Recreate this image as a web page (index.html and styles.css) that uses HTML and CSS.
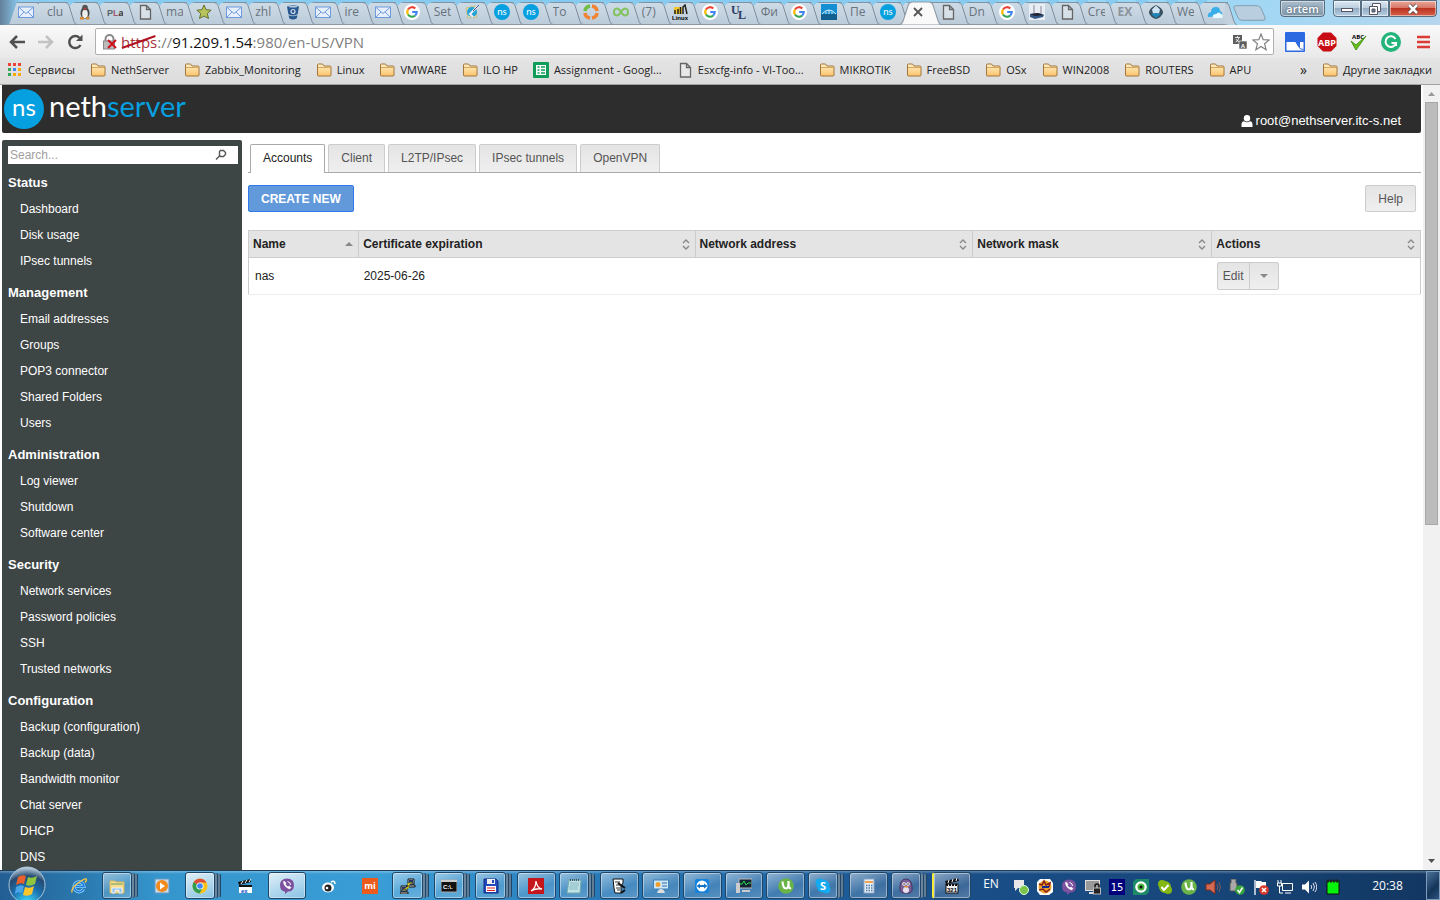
FILE: index.html
```html
<!DOCTYPE html>
<html lang="en">
<head>
    <meta charset="UTF-8">
    <meta name="viewport" content="width=device-width, initial-scale=1.0">
    <title>VPN - NethServer</title>
    <link rel="stylesheet" href="styles.css">
</head>
<body>
    <!-- shared icons -->
    <svg class="sprite" aria-hidden="true">
        <linearGradient id="g-folder" x1="0" y1="0" x2="0" y2="1"><stop offset="0" stop-color="#fff0c8"/><stop offset="1" stop-color="#fbc46c"/></linearGradient>
        <radialGradient id="g-orb" cx=".5" cy="1" r="1"><stop offset="0" stop-color="#3fe0ff"/><stop offset=".45" stop-color="#1b6fae"/><stop offset=".75" stop-color="#264a70"/><stop offset="1" stop-color="#c8dbe8"/></radialGradient>
        <symbol id="mail" viewBox="0 0 16 16"><rect x=".5" y="3" width="15" height="10.5" fill="#e6effb" stroke="#6f9bdb"/><path d="M1 3.500l7 6 7-6M1 13l5-5M15 13l-5-5" fill="none" stroke="#6f9bdb"/></symbol>
        <symbol id="page" viewBox="0 0 16 16"><path d="M3.500 1.500h6l4 4v9.500h-10zM9.500 1.500v4h4" fill="#f4f4f4" fill-opacity=".4" stroke="#666" stroke-width="1.300"/></symbol>
        <symbol id="google" viewBox="0 0 16 16"><circle cx="8" cy="8" r="8" fill="#fff"/><g fill="none" stroke-width="2.200"><path d="M11.300 4.500A4.700 4.700 0 0 0 4 5.500" stroke="#ea4335"/><path d="M4 5.500a4.700 4.700 0 0 0 0 5" stroke="#fbbc05"/><path d="M4 10.500a4.700 4.700 0 0 0 7.200 1" stroke="#34a853"/><path d="M11.200 11.500A4.700 4.700 0 0 0 12.700 8H8.200" stroke="#4285f4"/></g></symbol>
        <symbol id="ns" viewBox="0 0 40 40"><circle cx="20" cy="20" r="20" fill="#069fdf"/><text x="20" y="27" text-anchor="middle" class="ns-text">ns</text></symbol>
        <symbol id="folder" viewBox="0 0 16 16"><path d="M1.500 13V3q0-1 1-1h4l1.500 2h6q1 0 1 1v8q0 1-1 1h-11.500q-1 0-1-1z" fill="url(#g-folder)" stroke="#a1763f"/><path d="M2 5.500h13" stroke="#d8a75e"/></symbol>
        <symbol id="tux" viewBox="0 0 16 16"><ellipse cx="8" cy="9" rx="4.500" ry="6" fill="#444"/><ellipse cx="8" cy="10" rx="2.800" ry="4.500" fill="#eee"/><circle cx="8" cy="3.500" r="2.800" fill="#555"/><path d="M6.500 4h3L8 6z" fill="#c33"/><path d="M3 13l4 0v2.500H3zM9 13h4l-1 2.500H9z" fill="#d28a3a"/></symbol>
        <symbol id="star" viewBox="0 0 16 16"><path d="M8 1l2.100 4.700 5 .5-3.800 3.300 1.200 5L8 12l-4.500 2.500 1.200-5L.9 6.200l5-.5z" fill="#b8c45c" stroke="#66702c"/></symbol>
        <symbol id="bucket" viewBox="0 0 16 16"><path d="M2 2.500q6-3 12 0l-1.300 7.500q-4.700 3-9.400 0zM3.600 11.300q4.400 2 8.800 0l-.6 3q-3.800 2.400-7.600 0z" fill="#28588f"/><ellipse cx="8" cy="2.600" rx="4.500" ry="1" fill="#b9cadd"/><circle cx="8" cy="7.500" r="2" fill="#28588f" stroke="#d5e0ec" stroke-width="1.200"/></symbol>
        <symbol id="pencil" viewBox="0 0 16 16"><path d="M2 4l9-2 2 11-9 1z" fill="#ece7bc" stroke="#c5bc82"/><circle cx="8" cy="8" r="5" fill="#22a4d8"/><path d="M14 2L6 10l3 3" fill="none" stroke="#eef" stroke-width="2"/><path d="M15 1l-6 6" stroke="#457" /></symbol>
        <symbol id="ring" viewBox="0 0 16 16"><g fill="none" stroke-width="3.500"><path d="M1.900 7A6.200 6.200 0 0 1 7 1.900" stroke="#70bd44"/><path d="M9 1.900A6.200 6.200 0 0 1 14.100 7M14.100 9A6.200 6.200 0 0 1 9 14.100M7 14.100A6.200 6.200 0 0 1 1.900 9" stroke="#f08432"/></g></symbol>
        <symbol id="loops" viewBox="0 0 16 16"><path d="M8 8C5 3 1 4 1 8s4 5 7 0 7-4 7 0-4 5-7 0z" fill="none" stroke="#82c35e" stroke-width="2"/></symbol>
        <symbol id="bridge" viewBox="0 0 16 16"><rect width="16" height="16" fill="#148fd4"/><rect y="10" width="16" height="6" fill="#12608f"/><path d="M1 10q7-8 14 0M5 7.500V10M8 6v4M11 7.500V10" fill="none" stroke="#d8efff"/></symbol>
        <symbol id="router" viewBox="0 0 16 16"><rect width="16" height="16" fill="#e8eef4"/><path d="M5 9V1M12 10V2" stroke="#889"/><path d="M1 10l8-1 6 2-1 2-8 2-5-2z" fill="#355a87"/><path d="M1 10l8-1 6 2-9 1z" fill="#223"/></symbol>
        <symbol id="gem" viewBox="0 0 16 16"><path d="M8 1q7 3 7 8-2 5-7 6-5-1-7-6 0-5 7-8z" fill="#3a5060"/><path d="M8 1.500l4 4-1 4H5L4 5.500z" fill="#cfe4f2"/><path d="M3 10l5 4 5-4-5-1z" fill="#1d86ba"/></symbol>
        <symbol id="cloud" viewBox="0 0 16 16"><path d="M1 13q-1-4 3-5 0-5 5-5 4 0 4 4 3 1 2 5z" fill="#38afe8"/><path d="M6 14q-1-4 3-4 3-3 5 0 3 1 1 4z" fill="#e9f7ff"/></symbol>
        <symbol id="utorrent" viewBox="0 0 16 16"><circle cx="8" cy="8" r="7.800" fill="#69b347"/><path d="M4.500 3.500q.5 7 3.500 7t2.500-7.500M10.500 6q0 5 2.500 4" fill="none" stroke="#fff" stroke-width="2.200"/></symbol>
        <symbol id="viber" viewBox="0 0 16 16"><path d="M8 .5q7 0 7 6.500t-6 6.600L6 16v-2.500Q1 13 1 7T8 .5z" fill="#7c529e"/><path d="M4.500 3.500q0 5 6 7.500l1.500-1.500-2-1.500-1 .8Q7 8 6.500 6.500L7 5.500 5.800 3.500z" fill="#fff" stroke="#fff" stroke-width=".6"/><path d="M8.500 3.500q3 .5 3 3.500" fill="none" stroke="#fff"/></symbol>
    </svg>

    <header class="browser">
        <div class="titlebar">
            <ul class="tabs">
                <li class="tab"><svg><use href="#mail"/></svg></li>
                <li class="tab"><span>clu</span></li>
                <li class="tab"><svg><use href="#tux"/></svg></li>
                <li class="tab"><svg viewBox="0 0 16 16"><text x="0" y="12" class="pla"><tspan fill="#566">P</tspan><tspan fill="#a45a74">L</tspan><tspan fill="#333">a</tspan></text></svg></li>
                <li class="tab"><svg><use href="#page"/></svg></li>
                <li class="tab"><span>ma</span></li>
                <li class="tab"><svg><use href="#star"/></svg></li>
                <li class="tab"><svg><use href="#mail"/></svg></li>
                <li class="tab"><span>zhl</span></li>
                <li class="tab"><svg><use href="#bucket"/></svg></li>
                <li class="tab"><svg><use href="#mail"/></svg></li>
                <li class="tab"><span>ire</span></li>
                <li class="tab"><svg><use href="#mail"/></svg></li>
                <li class="tab"><svg><use href="#google"/></svg></li>
                <li class="tab"><span>Set</span></li>
                <li class="tab"><svg><use href="#pencil"/></svg></li>
                <li class="tab"><svg><use href="#ns"/></svg></li>
                <li class="tab"><svg><use href="#ns"/></svg></li>
                <li class="tab"><span>To</span></li>
                <li class="tab"><svg><use href="#ring"/></svg></li>
                <li class="tab"><svg><use href="#loops"/></svg></li>
                <li class="tab"><span>(7)</span></li>
                <li class="tab"><svg viewBox="0 0 16 16"><rect x="2" y="3" width="8" height="7" fill="#f1c62b"/><path d="M11 10V3l2-2 2 9M3 10V6M6 10V5M8.500 10V3" stroke="#222" stroke-width="1.500" fill="none"/><text x="0" y="15.500" class="tiny">Linux</text></svg></li>
                <li class="tab"><svg><use href="#google"/></svg></li>
                <li class="tab"><svg viewBox="0 0 16 16"><text x="0" y="10" class="ul">U</text><text x="7" y="15" class="ul">L</text></svg></li>
                <li class="tab"><span>Фи</span></li>
                <li class="tab"><svg><use href="#google"/></svg></li>
                <li class="tab"><svg><use href="#bridge"/></svg></li>
                <li class="tab"><span>Пе</span></li>
                <li class="tab"><svg><use href="#ns"/></svg></li>
                <li class="tab active"><button class="close" aria-label="Close tab"><svg viewBox="0 0 16 16"><path d="M4 4l8 8M12 4l-8 8" stroke="#555" stroke-width="1.800"/></svg></button></li>
                <li class="tab"><svg><use href="#page"/></svg></li>
                <li class="tab"><span>Dn</span></li>
                <li class="tab"><svg><use href="#google"/></svg></li>
                <li class="tab"><svg><use href="#router"/></svg></li>
                <li class="tab"><svg><use href="#page"/></svg></li>
                <li class="tab"><span>Cre</span></li>
                <li class="tab"><span class="ex">EX</span></li>
                <li class="tab"><svg><use href="#gem"/></svg></li>
                <li class="tab"><span>We</span></li>
                <li class="tab"><svg><use href="#cloud"/></svg></li>
            </ul>
            <button class="new-tab" aria-label="New tab"><svg viewBox="0 0 34 16"><path d="M4 .5h21q3 0 4 3l4 9q1 3-2 3H9q-3 0-4-3L1 3Q0 .5 4 .5z" fill="#b9cfdf" stroke="#829aad"/></svg></button>
            <div class="window-controls">
                <button class="profile">artem</button>
                <button class="win min" aria-label="Minimize"><svg viewBox="0 0 14 12"><rect x="1.500" y="5.500" width="11" height="3" fill="#fff" stroke="#556"/></svg></button>
                <button class="win max" aria-label="Restore"><svg viewBox="0 0 14 12"><path d="M4.500.5h8v8h-8z" fill="#fff" stroke="#556"/><path d="M1.500 3.500h8v8h-8z" fill="#fff" stroke="#556"/><path d="M4 6h3v3H4z" fill="#678" stroke="#556"/></svg></button>
                <button class="win quit" aria-label="Close"><svg viewBox="0 0 14 12"><path d="M3 2l8 8M11 2l-8 8" stroke="#544" stroke-width="4"/><path d="M3 2l8 8M11 2l-8 8" stroke="#fff" stroke-width="2.500"/></svg></button>
            </div>
        </div>

        <div class="toolbar">
            <button aria-label="Back"><svg viewBox="0 0 18 18"><path d="M17 9H3M9 3L3 9l6 6" fill="none" stroke="#505050" stroke-width="2.500"/></svg></button>
            <button aria-label="Forward"><svg viewBox="0 0 18 18"><path d="M1 9h14M9 3l6 6-6 6" fill="none" stroke="#c2c2c2" stroke-width="2.500"/></svg></button>
            <button aria-label="Reload"><svg viewBox="0 0 18 18"><path d="M14.500 12A6 6 0 1 1 13.500 4.800" fill="none" stroke="#505050" stroke-width="2.500"/><path d="M16.500 1.500v6.500H10z" fill="#505050"/></svg></button>
            <div class="omnibox">
                <svg class="lock" viewBox="0 0 16 16"><path d="M3.500 8V5a4 4 0 0 1 8 0v3" fill="none" stroke="#888" stroke-width="2"/><rect x="1.500" y="7" width="11" height="8" fill="#bbb" stroke="#888"/><path d="M6 6l8 8M14 6l-8 8" stroke="#d0111b" stroke-width="2"/></svg>
                <label class="address" for="url"><span class="scheme">https<svg viewBox="0 0 40 20" preserveAspectRatio="none"><path d="M1 16L38 4" stroke="#b01020" stroke-width="2"/></svg></span>://<span class="host">91.209.1.54</span></label>
                <input id="url" type="text" value=":980/en-US/VPN">
                <button aria-label="Translate"><svg viewBox="0 0 16 16"><rect x="1" y="1" width="9" height="9" fill="#5c5c5c"/><path d="M3 3.500h5M5.500 2v1.500M3.500 8q3-1 3.500-4.500M4 5q1 2 3 3" stroke="#fff" fill="none" stroke-width=".8"/><rect x="7" y="7" width="8" height="8" fill="#5c5c5c" stroke="#fff" stroke-width=".6"/><text x="8.800" y="13.600" class="tiny white">A</text></svg></button>
                <button aria-label="Bookmark this page"><svg viewBox="0 0 18 18"><path d="M9 1l2.200 5.600 6 .4-4.600 3.800 1.500 5.900L9 13.400l-5.100 3.300 1.500-5.900L.8 7l6-.4z" fill="#fff" stroke="#808080" stroke-width="1.200"/></svg></button>
            </div>
            <button class="ext" aria-label="Tab manager"><svg viewBox="0 0 20 20"><rect x="0" y="0" width="20" height="20" rx="1" fill="#2d69e0"/><path d="M1.500 10h9l3.500 5h1V10h3.500v8.500h-17z" fill="#fff"/><path d="M10.500 9l3 5.500q1 3 5 3" fill="none" stroke="#2d69e0"/></svg></button>
            <button class="ext" aria-label="Adblock Plus"><svg viewBox="0 0 20 20"><path d="M6 .5h8L19.500 6v8L14 19.500H6L.5 14V6z" fill="#c80d14"/><text x="10" y="13.500" text-anchor="middle" class="abp">ABP</text></svg></button>
            <button class="ext" aria-label="Spell check"><svg viewBox="0 0 20 20"><text x="9" y="7" text-anchor="middle" class="abc">ABC</text><path d="M2 9l5 4 10-9L7 18z" fill="#6bc11c" stroke="#45981a"/></svg></button>
            <button class="ext" aria-label="Grammarly"><svg viewBox="0 0 20 20"><circle cx="10" cy="10" r="10" fill="#23b47b"/><path d="M14.500 7A5.300 5.300 0 1 0 15 11H10.500M15 11v3" fill="none" stroke="#fff" stroke-width="2"/></svg></button>
            <button class="ext" aria-label="Menu"><svg viewBox="0 0 20 20"><path d="M4 5h13M4 10h13M4 15h13" stroke="#dd3b36" stroke-width="2.600"/></svg></button>
        </div>

        <nav class="bookmarks">
            <a href="#"><svg viewBox="0 0 16 16"><path d="M1 1h3v3H1zM6 1h3v3H6zM11 1h3v3h-3z" fill="#ea4335"/><path d="M1 6h3v3H1z" fill="#34a853"/><path d="M6 6h3v3H6z" fill="#4285f4"/><path d="M11 6h3v3h-3zM6 11h3v3H6zM11 11h3v3h-3z" fill="#fbaa05"/><path d="M1 11h3v3H1z" fill="#34a853"/></svg>Сервисы</a>
            <a href="#"><svg><use href="#folder"/></svg>NethServer</a>
            <a href="#"><svg><use href="#folder"/></svg>Zabbix_Monitoring</a>
            <a href="#"><svg><use href="#folder"/></svg>Linux</a>
            <a href="#"><svg><use href="#folder"/></svg>VMWARE</a>
            <a href="#"><svg><use href="#folder"/></svg>ILO HP</a>
            <a href="#"><svg viewBox="0 0 16 16"><rect width="16" height="16" rx="1" fill="#0f9d58"/><path d="M3 3h10v10H3z" fill="#fff"/><path d="M4.500 5h2M8 5h4M4.500 8h2M8 8h4M4.500 11h2M8 11h4" stroke="#0f9d58" stroke-width="1.500"/></svg>Assignment - Googl...</a>
            <a href="#"><svg><use href="#page"/></svg>Esxcfg-info - VI-Too...</a>
            <a href="#"><svg><use href="#folder"/></svg>MIKROTIK</a>
            <a href="#"><svg><use href="#folder"/></svg>FreeBSD</a>
            <a href="#"><svg><use href="#folder"/></svg>OSx</a>
            <a href="#"><svg><use href="#folder"/></svg>WIN2008</a>
            <a href="#"><svg><use href="#folder"/></svg>ROUTERS</a>
            <a href="#"><svg><use href="#folder"/></svg>APU</a>
            <button class="more">»</button>
            <a class="other" href="#"><svg><use href="#folder"/></svg>Другие закладки</a>
        </nav>
    </header>

    <div class="viewport">
        <div class="page">
            <header class="site-header">
                <a class="logo" href="#"><svg><use href="#ns"/></svg><span class="wordmark">neth<b>server</b></span></a>
                <a class="user" href="#"><svg viewBox="0 0 12 12"><circle cx="6" cy="3.200" r="3.200" fill="#fff"/><path d="M.5 12V9.500Q.5 6.500 3 6.300q3 1.700 6 0 2.500.2 2.500 3.200V12z" fill="#fff"/></svg>root@nethserver.itc-s.net</a>
            </header>
            <div class="columns">
                <aside class="sidebar">
                    <form class="search">
                        <input type="text" placeholder="Search..." aria-label="Search">
                        <button type="button" aria-label="Search"><svg viewBox="0 0 12 12"><path d="M4.500 2.500l1-1h3l2 2v2l-2 2h-3l-1-1zM4.500 7L1 10.500" fill="none" stroke="#555" stroke-width="1.400"/></svg></button>
                    </form>
                    <nav>
                        <h2>Status</h2>
                        <ul>
                            <li><a href="#">Dashboard</a></li>
                            <li><a href="#">Disk usage</a></li>
                            <li><a href="#">IPsec tunnels</a></li>
                        </ul>
                        <h2>Management</h2>
                        <ul>
                            <li><a href="#">Email addresses</a></li>
                            <li><a href="#">Groups</a></li>
                            <li><a href="#">POP3 connector</a></li>
                            <li><a href="#">Shared Folders</a></li>
                            <li><a href="#">Users</a></li>
                        </ul>
                        <h2>Administration</h2>
                        <ul>
                            <li><a href="#">Log viewer</a></li>
                            <li><a href="#">Shutdown</a></li>
                            <li><a href="#">Software center</a></li>
                        </ul>
                        <h2>Security</h2>
                        <ul>
                            <li><a href="#">Network services</a></li>
                            <li><a href="#">Password policies</a></li>
                            <li><a href="#">SSH</a></li>
                            <li><a href="#">Trusted networks</a></li>
                        </ul>
                        <h2>Configuration</h2>
                        <ul>
                            <li><a href="#">Backup (configuration)</a></li>
                            <li><a href="#">Backup (data)</a></li>
                            <li><a href="#">Bandwidth monitor</a></li>
                            <li><a href="#">Chat server</a></li>
                            <li><a href="#">DHCP</a></li>
                            <li><a href="#">DNS</a></li>
                        </ul>
                    </nav>
                </aside>
                <main>
                    <nav class="vpn-tabs">
                        <a class="current" href="#">Accounts</a>
                        <a href="#">Client</a>
                        <a href="#">L2TP/IPsec</a>
                        <a href="#">IPsec tunnels</a>
                        <a href="#">OpenVPN</a>
                    </nav>
                    <div class="actions">
                        <button class="btn primary">CREATE NEW</button>
                        <button class="btn">Help</button>
                    </div>
                    <table>
                        <colgroup>
                            <col class="c-name"><col class="c-cert"><col class="c-addr"><col class="c-mask"><col class="c-act">
                        </colgroup>
                        <thead>
                            <tr>
                                <th><div>Name<svg viewBox="0 0 8 12"><path d="M0 8l4-4 4 4z" fill="#888"/></svg></div></th>
                                <th><div>Certificate expiration<svg viewBox="0 0 8 12"><path d="M1 5l3-3 3 3M1 8l3 3 3-3" fill="none" stroke="#888" stroke-width="1.400"/></svg></div></th>
                                <th><div>Network address<svg viewBox="0 0 8 12"><path d="M1 5l3-3 3 3M1 8l3 3 3-3" fill="none" stroke="#888" stroke-width="1.400"/></svg></div></th>
                                <th><div>Network mask<svg viewBox="0 0 8 12"><path d="M1 5l3-3 3 3M1 8l3 3 3-3" fill="none" stroke="#888" stroke-width="1.400"/></svg></div></th>
                                <th><div>Actions<svg viewBox="0 0 8 12"><path d="M1 5l3-3 3 3M1 8l3 3 3-3" fill="none" stroke="#888" stroke-width="1.400"/></svg></div></th>
                            </tr>
                        </thead>
                        <tbody>
                            <tr>
                                <td>nas</td>
                                <td>2025-06-26</td>
                                <td></td>
                                <td></td>
                                <td><div class="split"><button>Edit</button><button aria-label="More actions"><svg viewBox="0 0 8 4"><path d="M0 0h8L4 4z" fill="#888"/></svg></button></div></td>
                            </tr>
                        </tbody>
                    </table>
                </main>
            </div>
        </div>
        <div class="scrollbar">
            <svg viewBox="0 0 17 17"><path d="M5 11l3.500-4 3.500 4z" fill="#999"/></svg>
            <div class="track"><div class="thumb"></div></div>
            <svg viewBox="0 0 17 17"><path d="M5 6l3.500 4L12 6z" fill="#505050"/></svg>
        </div>
    </div>

    <footer class="taskbar">
        <button class="start" aria-label="Start"><svg viewBox="0 0 38 38"><circle cx="19" cy="19" r="18" fill="url(#g-orb)" stroke="#a9c4d8"/><path d="M10 11q4-3 8-1l-2 8q-4-2-8 1z" fill="#e8602c"/><path d="M20 11q4 2 9-1l-2 8q-5 3-9 1z" fill="#8fc63e"/><path d="M8 21q4-3 8-1l-2 7q-4-2-7 1z" fill="#4aa5e8"/><path d="M17 21q5 2 9-1l-2 8q-4 3-9 1z" fill="#fdc62b"/></svg></button>
        <div class="tasks">
            <button aria-label="Internet Explorer"><svg viewBox="0 0 16 16"><path d="M12.500 11A5 5 0 1 1 13 8.500H5" fill="none" stroke="#8fd4ff" stroke-width="3.200"/><path d="M12.500 11A5 5 0 1 1 13 8.500H5" fill="none" stroke="#1c7be0" stroke-width="1.600"/><path d="M1 14.500Q0 10 7 5t8.500-4q.5 1-1.500 3.500" fill="none" stroke="#f6c544" stroke-width="1.400"/></svg></button>
            <button class="open stack" aria-label="Explorer"><svg viewBox="0 0 16 16"><path d="M1 3h5l1 1h8v11H1z" fill="#f5df8e" stroke="#d8b75a"/><path d="M2 6h12" stroke="#6b9a5c"/><path d="M3 15v-5h10v5h-3v-3H6v3z" fill="#8bc4ea" stroke="#eef"/></svg></button>
            <button aria-label="Media player"><svg viewBox="0 0 16 16"><rect x="1" y="1" width="14" height="14" fill="#c9dced" stroke="#6897c2"/><circle cx="8" cy="8" r="6" fill="#f28a1c"/><path d="M6 4.500l5 3.500-5 3.500z" fill="#fff"/></svg></button>
            <button class="open lit stack" aria-label="Chrome"><svg viewBox="0 0 16 16"><circle cx="8" cy="8" r="7.500" fill="#fbc116"/><path d="M8 8L1.500 4.300A7.500 7.500 0 0 1 14.500 4.500H8z" fill="#dd4b39"/><path d="M8 8L1.500 4.300A7.500 7.500 0 0 0 7.500 15.500L11 9.500z" fill="#2f9e50"/><circle cx="8" cy="8" r="3.600" fill="#fff"/><circle cx="8" cy="8" r="2.800" fill="#4285f4"/></svg></button>
            <button aria-label="Movie tool"><svg viewBox="0 0 16 16"><path d="M1 4l13-3v3L2 7z" fill="#111"/><path d="M4 6l2-3M8 5l2-3M12 4l2-3" stroke="#fff"/><rect x="2" y="7" width="13" height="8" fill="#fff"/><path d="M2 7h13v2H2z" fill="#111"/><text x="4" y="14.500" class="tiny blue">ex</text></svg></button>
            <button class="open lit" aria-label="Viber"><svg><use href="#viber"/></svg></button>
            <button aria-label="Weibo"><svg viewBox="0 0 16 16"><ellipse cx="7" cy="9.500" rx="6" ry="5" fill="#fff"/><circle cx="7" cy="10" r="3.500" fill="#222"/><circle cx="6" cy="10" r="1.300" fill="#fff"/><path d="M10 4q4-2 4 2" fill="none" stroke="#fff" stroke-width="1.500"/></svg></button>
            <button aria-label="Mi"><svg viewBox="0 0 16 16"><rect width="16" height="16" fill="#ea5b1c"/><text x="8" y="11" text-anchor="middle" class="abp">mi</text></svg></button>
            <button class="open stack" aria-label="PuTTY"><svg viewBox="0 0 16 16"><path d="M8 1h6v5H8zM7 7h8v2H7zM1 8h6v5H1zM0 14h8v2H0z" fill="#ccc" stroke="#111"/><path d="M9 2h4v3H9zM2 9h4v3H2z" fill="#236"/><path d="M12 4L7 6l2 2-6 4 6-2-1-2z" fill="#ffe82c" stroke="#880" stroke-width=".5"/></svg></button>
            <button class="open stack" aria-label="Command prompt"><svg viewBox="0 0 16 16"><rect y="2" width="16" height="12" fill="#111" stroke="#aaa"/><path d="M0 3h16" stroke="#ccc" stroke-width="2"/><text x="2" y="11" class="tiny white">C:\.</text></svg></button>
            <button class="open stack" aria-label="Save tool"><svg viewBox="0 0 16 16"><path d="M1 1h12l2 2v12H1z" fill="#2449bc" stroke="#122c80"/><path d="M4 1h8v5H4z" fill="#eee"/><path d="M9 2h2v3H9z" fill="#2449bc"/><path d="M3 8h10v6H3z" fill="#fff"/><path d="M4 10h8M4 12.500h8" stroke="#d22"/></svg></button>
            <button class="open" aria-label="Acrobat"><svg viewBox="0 0 16 16"><rect width="16" height="16" fill="#c5161c"/><path d="M3 13q5-3 5-10 1 7 6 8-6-1-11 2z" fill="none" stroke="#fff" stroke-width="1.300"/></svg></button>
            <button class="open stack" aria-label="Notepad"><svg viewBox="0 0 16 16"><path d="M3 2h12l-1 13H1z" fill="#bfe2e8" stroke="#7aa"/><path d="M4 5h9M4 7h9M3 9h9M3 11h9" stroke="#8bb"/><path d="M4 2h10" stroke="#456" stroke-dasharray="1 1" stroke-width="2"/></svg></button>
            <button class="open" aria-label="Script editor"><svg viewBox="0 0 16 16"><path d="M2 1h10v4l-2 3v7H4l-1-5z" fill="#fff" stroke="#111"/><path d="M4 4h5M5 7h4M5 10h4M6 12h3" stroke="#333"/><path d="M7 5l7 5M14 12l-4 3" stroke="#111" stroke-width="2"/></svg></button>
            <button class="open" aria-label="Control panel"><svg viewBox="0 0 16 16"><rect x=".5" y="2" width="15" height="9" fill="#cfe8fa" stroke="#3f82b8"/><circle cx="5" cy="6.500" r="2.500" fill="#f0a02c"/><path d="M9 5h5M9 8h5" stroke="#2869a0"/><path d="M4 15q1-4 4-4t4 4z" fill="#ddd"/></svg></button>
            <button class="open" aria-label="TeamViewer"><svg viewBox="0 0 16 16"><rect x="1" y="1" width="14" height="14" rx="2" fill="#1482dc"/><circle cx="8" cy="8" r="5.500" fill="#fff"/><path d="M2.500 8L6 5.500V7h4V5.500L13.500 8 10 10.500V9H6v1.500z" fill="#1474c8"/></svg></button>
            <button class="open" aria-label="System monitor"><svg viewBox="0 0 16 16"><rect x="3" y="1" width="13" height="9" fill="#123" stroke="#bbb"/><path d="M4 6h2l2-3 2 4 2-2h3" fill="none" stroke="#2ddc4a"/><path d="M0 5h4v10H0zM6 12h8v2H6z" fill="#ccc"/></svg></button>
            <button class="open" aria-label="uTorrent"><svg><use href="#utorrent"/></svg></button>
            <button class="open stack" aria-label="Skype"><svg viewBox="0 0 16 16"><circle cx="8" cy="8" r="6.500" fill="#15aaf0"/><circle cx="4.500" cy="4.500" r="4" fill="#15aaf0"/><circle cx="11.500" cy="11.500" r="4" fill="#15aaf0"/><text x="8" y="12" text-anchor="middle" class="skype">S</text></svg></button>
            <button class="open" aria-label="Calculator"><svg viewBox="0 0 16 16"><rect x="3" y="1" width="10" height="14" fill="#e5edf6" stroke="#8aa6c4"/><path d="M4 3h8v2H4z" fill="#f0a54a"/><path d="M5 7.500h7M5 10h7M5 12.500h7" stroke="#4e7aa8" stroke-width="1.500" stroke-dasharray="1.500 1"/></svg></button>
            <button class="open stack" aria-label="Pidgin"><svg viewBox="0 0 16 16"><path d="M2 13Q1 1 8 1t6 12l-2 2H5z" fill="#7a5f96" stroke="#47345f"/><ellipse cx="8" cy="12" rx="3" ry="3" fill="#e8e2ef"/><circle cx="6" cy="6" r="1.800" fill="#fff"/><circle cx="10" cy="6" r="1.800" fill="#fff"/><path d="M6 6h.1M10 6h.1" stroke="#222" stroke-width="1.500" stroke-linecap="round"/><path d="M6 8h5l-3 2z" fill="#e8962c"/></svg></button>
            <button class="open alert" aria-label="Media Player Classic"><svg viewBox="0 0 16 16"><path d="M1 3l13-3 1 3L2 6z" fill="#111"/><path d="M4 5l1-3M8 4l1-3M12 3l1-3" stroke="#fff"/><rect x="2" y="6" width="12" height="9" fill="#eee" stroke="#111"/><path d="M2 7h12" stroke="#111" stroke-width="2" stroke-dasharray="2 1"/><text x="3" y="14" class="tiny">321</text></svg></button>
        </div>
        <button class="lang">EN</button>
        <div class="tray">
            <svg viewBox="0 0 16 16"><path d="M1 1h10v8H5l-3 3V9H1z" fill="#e8e8e8"/><circle cx="11" cy="11" r="4.500" fill="#7cc34c" stroke="#dfd"/></svg>
            <svg viewBox="0 0 16 16"><path d="M3 0h10l3 4v9l-4 3H3l-3-4V3z" fill="#fff"/><circle cx="8" cy="8" r="6.500" fill="#e9a52b"/><path d="M2 5l3 1 2-4 2 4 4-2-1 4M2 11l4-1 3 3 4-3" fill="none" stroke="#8b1a1a" stroke-width="1.500"/><path d="M5 8h7" stroke="#14289c" stroke-width="2"/></svg>
            <svg><use href="#viber"/></svg>
            <svg viewBox="0 0 16 16"><rect x=".5" y="1.500" width="14" height="10" fill="#999" stroke="#ddd"/><path d="M4 14h6" stroke="#ddd" stroke-width="2"/><path d="M10 9V7a2 2 0 0 1 4 0v2" fill="none" stroke="#111" stroke-width="1.500"/><rect x="8.500" y="9" width="7" height="6" fill="#222" stroke="#bbb"/></svg>
            <svg viewBox="0 0 16 16"><rect width="16" height="16" fill="#00007c"/><text x="8" y="12" text-anchor="middle" class="fifteen">15</text></svg>
            <svg viewBox="0 0 16 16"><path d="M3 0h13v13l-3 3H0V3z" fill="#1d8a68"/><circle cx="8" cy="8" r="5.800" fill="#fff"/><circle cx="8" cy="8" r="3.500" fill="#46b33c"/><circle cx="8" cy="8" r="1.500" fill="#111"/></svg>
            <svg viewBox="0 0 16 16"><circle cx="8" cy="8" r="6" fill="#82b714"/><circle cx="5" cy="5" r="4" fill="#82b714"/><circle cx="11" cy="11" r="4" fill="#82b714"/><path d="M4.500 8l2.500 3 4.500-5" fill="none" stroke="#fff" stroke-width="2"/></svg>
            <svg><use href="#utorrent"/></svg>
            <svg viewBox="0 0 16 16"><path d="M1 5h4l5-4v14l-5-4H1z" fill="#d56a52" stroke="#7d2a1b"/><path d="M12 5q2 3 0 6M14 3q3 5 0 10" fill="none" stroke="#7b5a5a"/></svg>
            <svg viewBox="0 0 16 16"><path d="M2 0h5v4h1v8H1V4h1z" fill="#aaa" stroke="#555"/><circle cx="11" cy="11" r="4.800" fill="#3aa53c"/><path d="M8.500 11l2 2.500 3-5" fill="none" stroke="#fff" stroke-width="1.500"/></svg>
            <svg viewBox="0 0 16 16"><path d="M2 1v15" stroke="#fff" stroke-width="1.300"/><path d="M3 2h5l1 1h4v6H3z" fill="#fff"/><circle cx="11" cy="11" r="4.800" fill="#d9372a"/><path d="M9 9l4 4M13 9l-4 4" stroke="#fff" stroke-width="1.600"/></svg>
            <svg viewBox="0 0 16 16"><path d="M5.500 4.500h10v7h-10z" fill="#1b406a" stroke="#fff"/><path d="M8 14h6M2.500 7v7H6M1 1v3M4 1v3M.5 4h4v3h-4z" fill="none" stroke="#fff"/></svg>
            <svg viewBox="0 0 16 16"><path d="M1 5.500h3l4-4v13l-4-4H1z" fill="#fff"/><path d="M10 6q1.500 2 0 4M12 4q3 4 0 8M14 3q3.500 5 0 10" fill="none" stroke="#dde"/></svg>
            <svg viewBox="0 0 16 16"><rect x="2" y="2" width="12" height="13" fill="#08f30b" stroke="#111"/><path d="M2 2h12" stroke="#222" stroke-width="3" stroke-dasharray="2 1"/></svg>
        </div>
        <time class="clock">20:38</time>
        <button class="show-desktop" aria-label="Show desktop"></button>
    </footer>
</body>
</html>
```
FILE: styles.css
```css
* {
    box-sizing: border-box;
}
body {
    margin: 0;
    height: 100vh;
    display: flex;
    flex-direction: column;
    overflow: hidden;
    background: #fff;
    color: #222;
    font: 12px "Liberation Sans", Arial, sans-serif;
}
button {
    font: inherit;
    color: inherit;
    background: none;
    border: 0;
    padding: 0;
}
input {
    font: inherit;
    border: 0;
    padding: 0;
    outline: 0;
    min-width: 0;
}
a {
    color: inherit;
    text-decoration: none;
}
ul {
    list-style: none;
    margin: 0;
    padding: 0;
}
svg {
    display: block;
    flex: none;
    width: 16px;
    height: 16px;
}
.sprite {
    position: absolute;
    width: 0;
    height: 0;
}

/* svg labels */
.ns-text {
    font: 24px Lato, sans-serif;
    fill: #fff;
}
.pla {
    font: bold 9px "Liberation Sans", sans-serif;
}
.ul {
    font: bold 12px "Liberation Serif", serif;
    fill: #2c3e66;
}
.tiny {
    font: bold 6px "Liberation Sans", sans-serif;
}
.white {
    fill: #fff;
}
.blue {
    fill: #1450c0;
}
.abp {
    font: bold 9px "Open Sans", sans-serif;
    fill: #fff;
}
.abc {
    font: bold 6px "Open Sans", sans-serif;
}
.skype {
    font: bold 11px "Open Sans", sans-serif;
    fill: #fff;
}
.fifteen {
    font: 10px "DejaVu Sans", sans-serif;
    fill: #fff;
}

/* browser */
.browser {
    flex: none;
    border-bottom: 1px solid #a3a3a3;
    font-family: "Open Sans", "Noto Sans", sans-serif;
}
.titlebar {
    display: flex;
    height: 25px;
    padding-left: 9px;
    background: linear-gradient(90deg, #64809a, #8ccdf2 20px, #82caf2 600px, #9cd8f6 1200px, #b4d6ee);
}
.tabs {
    flex: 1;
    min-width: 0;
    display: flex;
}
.tab {
    position: relative;
    flex: 1;
    min-width: 0;
    display: flex;
    align-items: center;
    justify-content: center;
    padding-left: 4px;
    border-bottom: 1px solid #8c99a5;
    background: linear-gradient(#7e93a3, #7e93a3) 0 2px / 100% 1px no-repeat, linear-gradient(#cddbe6, #b9c9d7) 0 3px no-repeat;
    color: #68727c;
}
.tab:first-child {
    clip-path: polygon(8px 2px, 100% 2px, 100% 0, calc(100% + 9px) 0, calc(100% + 9px) 100%, 0 100%);
}
.tab span {
    width: 17px;
    overflow: hidden;
    white-space: nowrap;
    line-height: 20px;
}
.tab .ex {
    font-weight: bold;
    color: #8b939b;
}
.tab::after {
    content: "";
    position: absolute;
    z-index: 1;
    right: -9px;
    top: 0;
    width: 12px;
    height: 25px;
    background: url("data:image/svg+xml,%3Csvg xmlns='http://www.w3.org/2000/svg' viewBox='0 0 12 25'%3E%3Cpath d='M0 0h12v2q-5 0-7 4Q4 2 0 2z' fill='%2388cbf1'/%3E%3Cpath d='M0 2.500q3 0 4 3l5 16q1 3 3 3' fill='none' stroke='%237e8d9b'/%3E%3C/svg%3E");
}
.tab:last-child::after {
    background: url("data:image/svg+xml,%3Csvg xmlns='http://www.w3.org/2000/svg' viewBox='0 0 12 25'%3E%3Cpath d='M0 2.500q3 0 4 3l5 16q1 3 3 3H0z' fill='%23c2d1dd'/%3E%3Cpath d='M0 2.500q3 0 4 3l5 16q1 3 3 3' fill='none' stroke='%237e8d9b'/%3E%3C/svg%3E");
}
.tab.active::after {
    z-index: 2;
    right: -10px;
    left: -2px;
    width: auto;
    background: url("data:image/svg+xml,%3Csvg xmlns='http://www.w3.org/2000/svg' preserveAspectRatio='none' viewBox='0 0 41 25'%3E%3Cpath d='M0 25q3-1 4-4L9 5q1-3 4-3h16q3 0 4 3l5 16q1 3 3 4z' fill='%23f9f9f9' stroke='%238e9aa4'/%3E%3C/svg%3E") 0 0 / 100% 100%;
}
.close {
    position: relative;
    z-index: 3;
}
.new-tab {
    align-self: flex-start;
    margin-left: 5px;
    padding-top: 5px;
}
.new-tab svg {
    width: 33px;
    height: 16px;
}
.window-controls {
    display: flex;
    align-items: flex-start;
    padding: 0 3px 0 14px;
}
.window-controls button {
    height: 17px;
    border: 1px solid #576d80;
    background: linear-gradient(#dce9f3, #b9cbdc 50%, #93acc3 50%, #b7cfe2);
    box-shadow: inset 0 0 0 1px rgba(255, 255, 255, .5);
    display: flex;
    align-items: center;
    justify-content: center;
}
.window-controls .profile {
    width: 45px;
    margin-right: 8px;
    border-radius: 0 0 4px 4px;
    background: linear-gradient(#a9bccb, #8098ab);
    color: #fff;
    font-size: 11px;
    font-weight: 600;
    text-shadow: 0 0 2px #345;
}
.window-controls .win {
    width: 28px;
}
.win svg {
    width: 14px;
    height: 12px;
}
.window-controls .min {
    border-radius: 0 0 0 4px;
}
.window-controls .quit {
    width: 48px;
    border-radius: 0 0 4px 0;
    background: linear-gradient(#e9a99c, #d5705e 50%, #bd3420 50%, #d4604a);
}
.toolbar {
    display: flex;
    align-items: center;
    gap: 11px;
    height: 33px;
    padding: 0 6px 0 8px;
    background: linear-gradient(#f9f9f9, #e9e9e9);
}
.toolbar > button svg {
    width: 18px;
    height: 18px;
}
.toolbar .ext svg {
    width: 20px;
    height: 20px;
}
.toolbar .ext {
    margin-right: 1px;
}
.omnibox {
    flex: 1;
    display: flex;
    align-items: center;
    height: 27px;
    padding: 0 3px 0 6px;
    border: 1px solid #b0b0b0;
    border-radius: 2px;
    background: #fff;
    color: #808080;
    font-size: 15px;
}
.omnibox input {
    flex: 1;
    color: #808080;
}
.omnibox button {
    margin-left: 4px;
}
.omnibox button:last-child svg {
    width: 18px;
    height: 18px;
}
.address {
    margin-left: 3px;
}
.scheme {
    position: relative;
    color: #a8323a;
}
.scheme svg {
    position: absolute;
    left: 0;
    top: 0;
    width: 100%;
    height: 100%;
}
.host {
    color: #111;
}
.bookmarks {
    display: flex;
    align-items: center;
    gap: 15px;
    height: 26px;
    padding: 0 8px 3px 7px;
    background: linear-gradient(#e4e4e4, #dcdcdc);
    white-space: nowrap;
    font-size: 11px;
}
.bookmarks a {
    display: flex;
    align-items: center;
    gap: 5px;
}
.more {
    margin-left: auto;
    font-size: 14px;
}

/* page */
.viewport {
    flex: 1;
    min-height: 0;
    display: flex;
}
.page {
    flex: 1;
    min-width: 0;
    padding: 0 2px;
    overflow: hidden;
}
.site-header {
    display: flex;
    justify-content: space-between;
    height: 48px;
    padding: 4px 20px 4px 2px;
    background: #2d2d2d;
    border-radius: 0 0 2px 2px;
    color: #fff;
}
.logo {
    display: flex;
    gap: 5px;
}
.logo svg {
    width: 40px;
    height: 40px;
}
.wordmark {
    font: 29px/34px Lato, sans-serif;
}
.wordmark b {
    font-weight: normal;
    color: #069fdf;
}
.user {
    align-self: flex-end;
    display: flex;
    align-items: center;
    gap: 3px;
    font-size: 13px;
    line-height: 16px;
}
.user svg {
    width: 12px;
    height: 12px;
}
.columns {
    display: flex;
    gap: 6px;
    margin-top: 7px;
}
.sidebar {
    flex: none;
    width: 240px;
    padding: 6px 4px 20px 6px;
    background: #3e4545;
    border-radius: 2px 2px 0 0;
    color: #fff;
}
.search {
    display: flex;
    align-items: center;
    height: 18px;
    margin-bottom: 6px;
    padding: 0 11px 0 2px;
    background: #fff;
}
.search input {
    flex: 1;
    background: none;
}
.search input::placeholder {
    color: #a0a0a0;
}
.search svg {
    width: 12px;
    height: 12px;
}
.sidebar h2 {
    margin: 0;
    font-size: 13px;
    line-height: 26px;
}
.sidebar ul {
    margin-bottom: 6px;
    padding-left: 12px;
}
.sidebar li {
    line-height: 26px;
}
main {
    flex: 1;
    min-width: 0;
    padding-top: 4px;
}
.vpn-tabs {
    display: flex;
    gap: 3px;
    padding-left: 2px;
    border-bottom: 1px solid #aaa;
}
.vpn-tabs a {
    padding: 0 12px;
    border: 1px solid #ccc;
    border-bottom: 0;
    border-radius: 2px 2px 0 0;
    background: linear-gradient(#e4e4e4, #efefef);
    color: #555;
    line-height: 27px;
}
.vpn-tabs .current {
    margin-bottom: -1px;
    border-color: #aaa;
    background: #fff;
    color: #222;
}
.actions {
    display: flex;
    justify-content: space-between;
    padding: 12px 5px 18px 0;
}
.btn {
    height: 27px;
    padding: 0 12px;
    border: 1px solid #ccc;
    border-radius: 2px;
    background: linear-gradient(#e4e4e4, #efefef);
    color: #555;
}
.primary {
    border-color: #3079ed;
    background: #6199db;
    color: #fff;
    font-weight: bold;
}
table {
    width: 100%;
    table-layout: fixed;
    border-collapse: collapse;
}
.c-name { width: 9.4%; }
.c-cert { width: 28.7%; }
.c-addr { width: 23.7%; }
.c-mask { width: 20.4%; }
.c-act { width: 17.8%; }
th {
    height: 27px;
    padding: 0 5px 0 4px;
    border: 1px solid #ccc;
    background: #e4e4e4;
    text-align: left;
}
th div {
    display: flex;
    align-items: center;
    justify-content: space-between;
}
th svg {
    width: 8px;
    height: 12px;
}
td {
    height: 37px;
    padding: 0 5px;
    border-bottom: 1px solid #eee;
}
td:first-child {
    padding-left: 6px;
    border-left: 1px solid #ccc;
}
td:last-child {
    border-right: 1px solid #ccc;
}
.split {
    display: flex;
}
.split button {
    height: 28px;
    padding: 0 5px;
    border: 1px solid #ccc;
    border-radius: 2px 0 0 2px;
    background: linear-gradient(#e4e4e4, #efefef);
    color: #555;
}
.split button + button {
    margin-left: -1px;
    padding: 0 10px;
    border-radius: 0 2px 2px 0;
}
.split svg {
    width: 8px;
    height: 4px;
}
.scrollbar {
    display: flex;
    flex-direction: column;
    width: 17px;
    background: #f1f1f1;
}
.scrollbar svg {
    width: 17px;
    height: 17px;
}
.track {
    flex: 1;
    padding: 0 2px;
}
.thumb {
    height: 56.3%;
    border: 1px solid #a8a8a8;
    background: #bcbcbc;
}

/* taskbar */
.taskbar {
    flex: none;
    display: flex;
    align-items: stretch;
    height: 30px;
    border-top: 1px solid #1d3d58;
    background: linear-gradient(rgba(255, 255, 255, .3), transparent 3px), linear-gradient(90deg, #235e93, #2a78ae 80px, #3596cd 160px, #3a9dd6 380px, #2779b8 600px, #2069a8 750px, #1a4f89 940px, #17467a 1200px, #123660);
    color: #fff;
    font-family: "Open Sans", "Noto Sans", sans-serif;
}
.start {
    width: 59px;
    padding-left: 8px;
    display: flex;
}
.start svg {
    width: 38px;
    height: 38px;
    margin-top: -5px;
}
.tasks {
    flex: 0 1 914px;
    display: grid;
    grid-auto-flow: column;
    grid-auto-columns: 1fr;
}
.tasks button {
    margin: 1px 2px 1px 1px;
    display: flex;
    align-items: center;
    justify-content: center;
}
.tasks .open {
    border: 1px solid #1d4668;
    border-radius: 3px;
    background: linear-gradient(160deg, rgba(255, 255, 255, .5), rgba(255, 255, 255, .15) 60%, rgba(255, 255, 255, .25));
    box-shadow: inset 0 0 0 1px rgba(255, 255, 255, .4);
}
.tasks .lit {
    background: linear-gradient(160deg, rgba(255, 255, 255, .85), rgba(255, 255, 255, .4));
}
.tasks .stack {
    margin-right: 10px;
    box-shadow: inset 0 0 0 1px rgba(255, 255, 255, .4), 3px 0 0 -1px rgba(255, 255, 255, .35), 4px 0 0 -1px #1d4668, 7px 0 0 -2px rgba(255, 255, 255, .3), 8px 0 0 -2px #1d4668;
}
.tasks .alert {
    border-left: 2px solid #f7ea3b;
}
.lang {
    width: 36px;
    padding-bottom: 5px;
}
.tray {
    flex: none;
    display: flex;
    align-items: center;
    gap: 8px;
    padding: 2px 0 0 4px;
}
.clock {
    flex: 1;
    align-self: center;
    padding-left: 8px;
    text-align: center;
}
.show-desktop {
    width: 14px;
    border: 1px solid #7f9cba;
    background: linear-gradient(135deg, #4c739c, #143459 60%, #2d5480);
}
```
